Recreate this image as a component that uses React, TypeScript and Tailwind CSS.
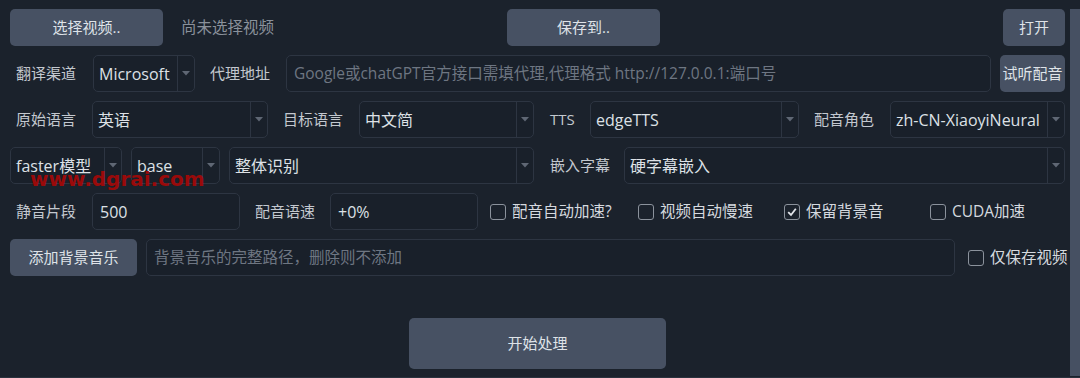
import React from "react";

const font = { fontFamily: '"Open Sans", "Noto Sans CJK SC", sans-serif' };

function Combo({ w, value, arrow = 17 }: { w: number; value: string; arrow?: number }) {
  return (
    <div
      className="flex h-[37px] shrink-0 items-stretch rounded-[5px] border border-[#2d3542] bg-[#19202a]"
      style={{ width: w }}
    >
      <div className="flex flex-1 items-center overflow-hidden whitespace-nowrap pl-[5px] text-[16px] text-[#dde1e6]">
        {value}
      </div>
      <div
        className="flex items-center justify-center border-l border-[#2d3542]"
        style={{ width: arrow }}
      >
        <svg width="8" height="5" viewBox="0 0 8 5">
          <path d="M0 0 L8 0 L4 4.5 Z" fill="#5f6774" />
        </svg>
      </div>
    </div>
  );
}

function Label({ children, className = "" }: { children: React.ReactNode; className?: string }) {
  return (
    <div className={"shrink-0 whitespace-nowrap text-[15px] text-[#c3c8cf] " + className}>{children}</div>
  );
}

function Btn({ children, w, h = 37, className = "" }: { children: React.ReactNode; w: number; h?: number; className?: string }) {
  return (
    <div
      className={"flex shrink-0 items-center justify-center whitespace-nowrap rounded-[5px] bg-[#475163] text-[15px] text-[#dfe3e8] " + className}
      style={{ width: w, height: h }}
    >
      {children}
    </div>
  );
}

function Input({ w, value, placeholder }: { w: number; value?: string; placeholder?: string }) {
  return (
    <div
      className="flex h-[37px] shrink-0 items-center overflow-hidden whitespace-nowrap rounded-[5px] border border-[#2d3542] bg-[#19202a] pl-[7px]"
      style={{ width: w }}
    >
      {value ? (
        <span className="text-[16px] text-[#dde1e6]">{value}</span>
      ) : (
        <span className="text-[15.5px] text-[#6e7682]">{placeholder}</span>
      )}
    </div>
  );
}

function Check({ label, checked = false, w }: { label: string; checked?: boolean; w?: number }) {
  return (
    <div className="flex shrink-0 items-center whitespace-nowrap" style={w ? { width: w } : undefined}>
      <div className="flex h-[16px] w-[16px] shrink-0 items-center justify-center rounded-[3px] border-[1.5px] border-[#8b929c]">
        {checked && (
          <svg width="12" height="12" viewBox="0 0 12 12">
            <path d="M2.2 6.2 L5 9 L9.8 2.8" fill="none" stroke="#e2e5ea" strokeWidth="1.8" />
          </svg>
        )}
      </div>
      <span className="ml-[6px] text-[15.5px] text-[#d5d9df]">{label}</span>
    </div>
  );
}

export default function App() {
  return (
    <div className="relative h-[378px] w-[1080px] overflow-hidden bg-[#1b222c]" style={font}>
      <div className="flex h-full">
        <div className="flex w-[1070px] flex-col pl-[10px] pr-[5px] pt-[9px]">
          {/* Row 1 */}
          <div className="flex h-[37px] items-center">
            <div className="flex w-[497px] shrink-0 items-center">
              <Btn w={153}>选择视频..</Btn>
              <span className="ml-[18px] text-[15.5px] text-[#8a919b]">尚未选择视频</span>
            </div>
            <Btn w={153}>保存到..</Btn>
            <div className="flex-1" />
            <Btn w={62}>打开</Btn>
          </div>
          {/* Row 2 */}
          <div className="mt-[9px] flex h-[37px] items-center">
            <Label className="ml-[6px] w-[77px]">翻译渠道</Label>
            <Combo w={102} value="Microsoft" />
            <Label className="ml-[15px] w-[76px]">代理地址</Label>
            <Input w={705} placeholder="Google或chatGPT官方接口需填代理,代理格式 http://127.0.0.1:端口号" />
            <div className="flex-1" />
            <Btn w={65}>试听配音</Btn>
          </div>
          {/* Row 3 */}
          <div className="mt-[9px] flex h-[37px] items-center">
            <Label className="ml-[6px] w-[76px]">原始语言</Label>
            <Combo w={176} value="英语" />
            <Label className="ml-[15px] w-[76px]">目标语言</Label>
            <Combo w={175} value="中文简" />
            <Label className="ml-[16px] w-[40px]">TTS</Label>
            <Combo w={209} value="edgeTTS" />
            <Label className="ml-[15px] w-[76px]">配音角色</Label>
            <Combo w={175} value="zh-CN-XiaoyiNeural" />
          </div>
          {/* Row 4 */}
          <div className="mt-[9px] flex h-[37px] items-center">
            <Combo w={112} value="faster模型" />
            <div className="ml-[9px]">
              <Combo w={89} value="base" />
            </div>
            <div className="ml-[9px]">
              <Combo w={305} value="整体识别" />
            </div>
            <Label className="ml-[16px] w-[74px]">嵌入字幕</Label>
            <Combo w={441} value="硬字幕嵌入" />
          </div>
          {/* Row 5 */}
          <div className="mt-[9px] flex h-[37px] items-center">
            <Label className="ml-[6px] w-[76px]">静音片段</Label>
            <Input w={148} value="500" />
            <Label className="ml-[15px] w-[75px]">配音语速</Label>
            <Input w={148} value="+0%" />
            <div className="ml-[12px] flex">
              <Check w={148} label="配音自动加速?" />
              <Check w={146} label="视频自动慢速" />
              <Check w={146} label="保留背景音" checked />
              <Check label="CUDA加速" />
            </div>
          </div>
          {/* Row 6 */}
          <div className="mt-[9px] flex h-[37px] items-center">
            <Btn w={127}>添加背景音乐</Btn>
            <div className="ml-[9px]">
              <Input w={809} placeholder="背景音乐的完整路径，删除则不添加" />
            </div>
            <div className="ml-[13px]">
              <Check label="仅保存视频" />
            </div>
          </div>
          {/* Row 7 */}
          <div className="mt-[42px] flex pl-[399px]">
            <Btn w={257} h={51}>开始处理</Btn>
          </div>
        </div>
        <div className="mt-[9px] mb-[2px] w-[10px] bg-[#465062]" />
      </div>
      <div className="absolute bottom-0 left-0 h-[1px] w-full bg-[#2a323e]" />
      <div
        className="pointer-events-none absolute left-[30px] top-[167px] text-[20px] font-bold leading-[24px] text-[#9a0a0a]"
        style={{ fontFamily: '"DejaVu Sans", sans-serif' }}
      >
        www.dgrai.com
      </div>
    </div>
  );
}
